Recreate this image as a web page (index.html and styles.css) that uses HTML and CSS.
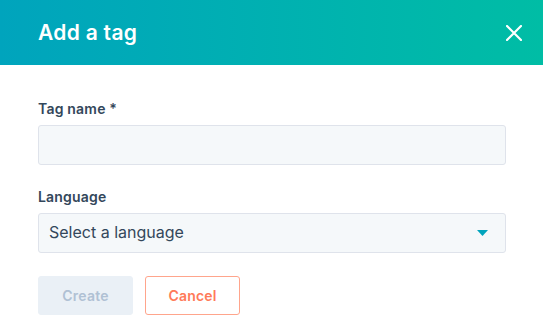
FILE: index.html
```html
<!DOCTYPE html>
<html>
<head>
<meta charset="utf-8">
<link rel="stylesheet" href="styles.css">
</head>
<body>
<div class="modal">
  <header class="modal-header">
    <h1 class="modal-title">Add a tag</h1>
    <button class="close-btn" aria-label="Close">
      <svg width="16" height="16" viewBox="0 0 16 16"><path d="M1 1L15 15M15 1L1 15" stroke="#fff" stroke-width="2.2" stroke-linecap="round"/></svg>
    </button>
  </header>
  <div class="modal-body">
    <div class="field">
      <label class="field-label">Tag name *</label>
      <div class="input"></div>
    </div>
    <div class="field">
      <label class="field-label">Language</label>
      <div class="input select">
        <span class="select-text">Select a language</span>
        <svg class="caret" width="11" height="6" viewBox="0 0 11 6"><path d="M0 0H11L5.5 6Z" fill="#00a4bd"/></svg>
      </div>
    </div>
    <div class="actions">
      <button class="btn btn-disabled">Create</button>
      <button class="btn btn-secondary">Cancel</button>
    </div>
  </div>
</div>
</body>
</html>
```
FILE: styles.css
```css
* { box-sizing: border-box; }
html, body { margin: 0; padding: 0; background: #fff; }
body { font-family: "Inter", "Lato", sans-serif; color: #33475b; }
.modal { width: 543px; height: 336px; }
.modal-header {
  height: 65px;
  background: linear-gradient(to right, #00a4bd, #00bda5);
  display: flex;
  align-items: center;
  justify-content: space-between;
  padding: 0 21px 0 38px;
}
.modal-title { margin: 0; font-size: 21px; font-weight: 600; color: #fff; letter-spacing: 0.3px; }
.close-btn { background: none; border: 0; padding: 0; width: 16px; height: 16px; display: flex; }
.modal-body { padding: 35px 37px 0 38px; }
.field { margin-bottom: 23px; }
.field-label { display: block; font-size: 14px; font-weight: 600; letter-spacing: 0.2px; margin-bottom: 7px; line-height: 18px; }
.input {
  height: 40px;
  background: #f5f8fa;
  border: 1px solid #dfe3eb;
  border-radius: 3px;
}
.select { display: flex; align-items: center; justify-content: space-between; padding: 0 17px 0 10px; }
.select-text { font-size: 16px; color: #33475b; line-height: 20px; margin-top: -2px; }
.actions { display: flex; gap: 12px; margin-top: 2px; }
.btn {
  font-family: inherit;
  width: 95px; height: 39px;
  border-radius: 3px;
  font-size: 14px; font-weight: 600; letter-spacing: 0.2px;
}
.btn-disabled { background: #eaf0f6; border: 1px solid #eaf0f6; color: #b0c1d4; }
.btn-secondary { background: #fff; border: 1px solid #ffa58c; color: #ff7a59; }
```
